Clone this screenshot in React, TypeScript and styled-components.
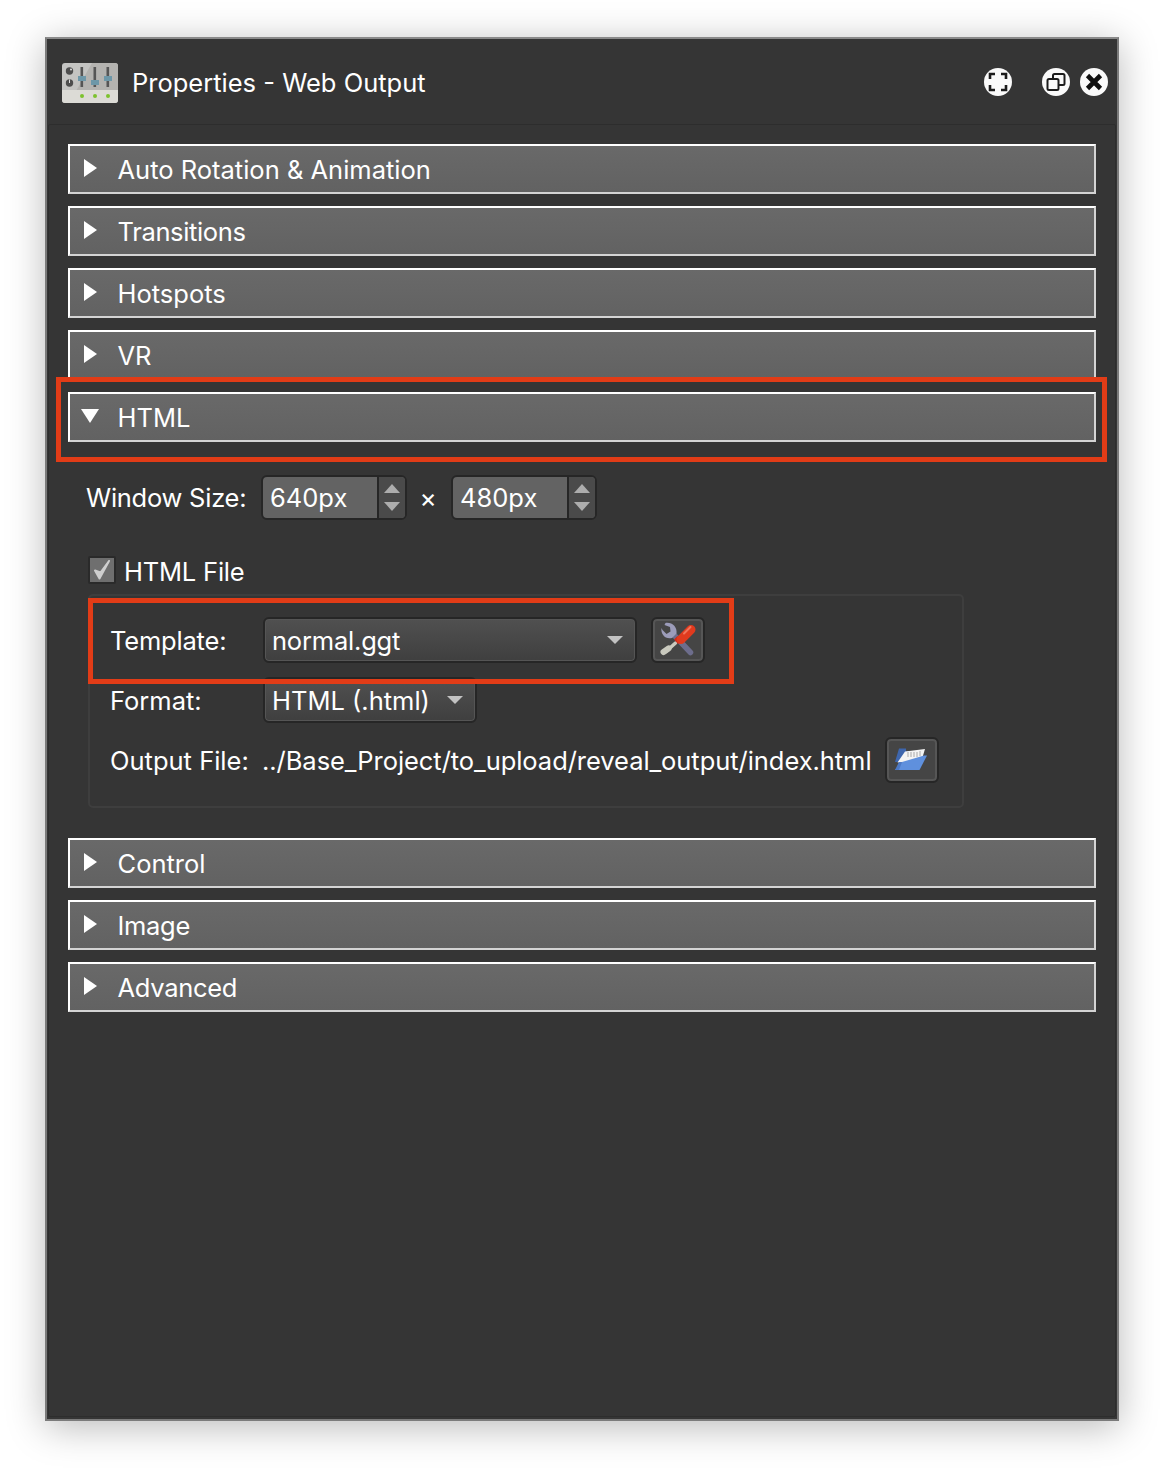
import React from "react";
import styled, { createGlobalStyle } from "styled-components";

const Global = createGlobalStyle`
  html, body { margin: 0; padding: 0; background: #fff; }
  body { font-family: Inter, "Noto Sans", "Liberation Sans", sans-serif; }
  * { box-sizing: border-box; }
`;

const Page = styled.div`
  width: 1164px;
  height: 1474px;
  padding: 37px 45px 0;
  overflow: hidden;
`;
const Win = styled.div`
  width: 1074px;
  height: 1384px;
  background: #353535;
  border: 2px solid #7b7b7b;
  border-top-color: #8a8a8a;
  box-shadow: 0 6px 36px rgba(0, 0, 0, 0.28);
  display: flex;
  flex-direction: column;
  color: #fff;
`;
const TitleBar = styled.header`
  height: 85px;
  flex: none;
  display: flex;
  align-items: center;
  padding: 2px 9px 0 15px;
`;
const Title = styled.h1`
  margin: 0 0 0 14px;
  font-size: 25.5px;
  font-weight: 400;
  line-height: 32px;
  flex: 1;
`;
const CircleBtn = styled.button<{ $ml?: number }>`
  width: 28px;
  height: 28px;
  padding: 0;
  border: 0;
  border-radius: 50%;
  background: #fafafa;
  margin-left: ${(p) => p.$ml ?? 0}px;
  margin-top: -2px;
  display: flex;
  align-items: center;
  justify-content: center;
`;
const Panel = styled.main`
  flex: 1;
  margin: 0 1px 2px 1px;
  border: 1px solid #2d2d2d;
  border-radius: 2px;
  padding: 19px 19px 0 19px;
  display: flex;
  flex-direction: column;
  gap: 12px;
`;
const HeaderWrap = styled.div`
  position: relative;
`;
const Header = styled.div<{ $ls?: number }>`
  height: 50px;
  display: flex;
  align-items: center;
  background: linear-gradient(#696969, #626262);
  border: 2px solid #d4d4d4;
  border-top-color: #fff;
  border-left-color: #fff;
  font-size: 25.5px;
  line-height: 32px;
  letter-spacing: ${(p) => p.$ls ?? 0}px;
  padding-left: 47.5px;
  padding-top: 1px;
  position: relative;
`;
const ArrowRight = styled.span`
  position: absolute;
  left: 14px;
  top: 13px;
  width: 0;
  height: 0;
  border-left: 13px solid #fff;
  border-top: 9.5px solid transparent;
  border-bottom: 9.5px solid transparent;
`;
const ArrowDown = styled.span`
  position: absolute;
  left: 11px;
  top: 15px;
  width: 0;
  height: 0;
  border-top: 14px solid #fff;
  border-left: 9.5px solid transparent;
  border-right: 9.5px solid transparent;
`;
const RedBox = styled.div<{ $t: number; $r: number; $b: number; $l: number }>`
  position: absolute;
  top: ${(p) => p.$t}px;
  right: ${(p) => p.$r}px;
  bottom: ${(p) => p.$b}px;
  left: ${(p) => p.$l}px;
  border: 5px solid #e23c17;
  pointer-events: none;
`;
const Body = styled.section`
  height: 372px;
  padding: 21px 0 0 18px;
  display: flex;
  flex-direction: column;
`;
const SizeRow = styled.div`
  display: flex;
  align-items: center;
  height: 45px;
  font-size: 25.5px;
`;
const SizeLabel = styled.span`
  width: 175px;
  flex: none;
  letter-spacing: -0.25px;
`;
const Times = styled.span`
  width: 44px;
  padding-right: 2px;
  text-align: center;
  font-size: 26px;
`;
const Spin = styled.div`
  width: 146px;
  height: 45px;
  border: 2px solid #262626;
  border-radius: 6px;
  background: #636363;
  display: flex;
  overflow: hidden;
`;
const SpinValue = styled.span`
  flex: 1;
  padding-left: 7px;
  font-size: 25.5px;
  line-height: 42px;
  color: #fff;
`;
const SpinArrows = styled.span`
  width: 28px;
  background: #4a4a4a;
  border-left: 2px solid #262626;
  display: flex;
  flex-direction: column;
  align-items: center;
  justify-content: center;
  gap: 9px;
`;
const SpinUp = styled.span`
  border-bottom: 9px solid #adadad;
  border-left: 8px solid transparent;
  border-right: 8px solid transparent;
`;
const SpinDown = styled.span`
  border-top: 9px solid #adadad;
  border-left: 8px solid transparent;
  border-right: 8px solid transparent;
`;
const CheckRow = styled.div`
  display: flex;
  align-items: center;
  gap: 8px;
  height: 28px;
  margin: 36px 0 0 2px;
  font-size: 25.5px;
`;
const CheckText = styled.span`
  padding-top: 2px;
  letter-spacing: -0.2px;
`;
const CheckBox = styled.span`
  width: 28px;
  height: 28px;
  background: #6f6f6f;
  border: 2px solid #2a2a2a;
  border-radius: 2px;
  display: flex;
  align-items: center;
  justify-content: center;
`;
const Group = styled.div`
  position: relative;
  margin: 10px 0 0 2px;
  width: 876px;
  height: 214px;
  border: 2px solid #3e3e3e;
  border-radius: 5px;
  padding: 21px 20px 0;
  display: flex;
  flex-direction: column;
  gap: 14px;
`;
const FormRow = styled.div<{ $ls?: number }>`
  display: flex;
  align-items: center;
  height: 46px;
  font-size: 25.5px;
  letter-spacing: ${(p) => p.$ls ?? 0}px;
`;
const FormLabel = styled.span`
  width: 153px;
  flex: none;
`;
const Combo = styled.div<{ $w: number }>`
  width: ${(p) => p.$w}px;
  height: 46px;
  border: 2px solid #262626;
  border-radius: 6px;
  background: linear-gradient(#505050, #3f3f3f);
  box-shadow: inset 0 0 0 1px #555;
  display: flex;
  align-items: center;
  justify-content: space-between;
  padding: 0 12px 0 7px;
`;
const ComboArrow = styled.span`
  border-top: 8px solid #c2c2c2;
  border-left: 8px solid transparent;
  border-right: 8px solid transparent;
`;
const IconBtn = styled.button<{ $ml: number }>`
  width: 54px;
  height: 46px;
  padding: 0;
  margin-left: ${(p) => p.$ml}px;
  border: 2px solid #262626;
  border-radius: 6px;
  background: #454545;
  box-shadow: inset 0 0 0 2px #565656;
  display: flex;
  align-items: center;
  justify-content: center;
`;
const PathText = styled.span`
  margin-left: -1px;
  width: 610px;
  flex: none;
  white-space: nowrap;
  letter-spacing: -0.05px;
`;

const MixerIcon = () => (
  <svg width="56" height="40" viewBox="0 0 56 40">
    <rect width="56" height="40" rx="3" fill="#c4c4c2" />
    <path d="M30 0H53a3 3 0 0 1 3 3V28H14Z" fill="#b2b1ae" opacity=".9" />
    <path d="M0 27H56V37a3 3 0 0 1-3 3H3a3 3 0 0 1-3-3Z" fill="#dcdbd6" />
    <circle cx="7.5" cy="8" r="3.7" fill="#4d4d4d" />
    <circle cx="9" cy="6.5" r="1" fill="#ddd" />
    <circle cx="7.5" cy="20" r="3.7" fill="#4d4d4d" />
    <rect x="7" y="16.5" width="1" height="3.5" fill="#ddd" />
    <rect x="18.5" y="4" width="2.6" height="20" fill="#555" />
    <rect x="31.5" y="4" width="2.6" height="20" fill="#555" />
    <rect x="44.5" y="4" width="2.6" height="20" fill="#555" />
    <rect x="16" y="13" width="8" height="5" fill="#6d97a8" />
    <rect x="29" y="17" width="8" height="5" fill="#6d97a8" />
    <rect x="42" y="13" width="8" height="5" fill="#6d97a8" />
    <circle cx="20" cy="33" r="2" fill="#7cc22f" />
    <circle cx="33" cy="33" r="2" fill="#7cc22f" />
    <circle cx="46" cy="33" r="2" fill="#7cc22f" />
  </svg>
);
const ExpandIcon = () => (
  <svg width="20" height="20" viewBox="0 0 20 20" fill="none" stroke="#1c1c1c" strokeWidth="2.6">
    <path d="M2 7V2H7M13 2H18V7M18 13V18H13M7 18H2V13" />
  </svg>
);
const RestoreIcon = () => (
  <svg width="20" height="20" viewBox="0 0 20 20" fill="none" stroke="#1c1c1c" strokeWidth="2">
    <rect x="1.5" y="7" width="11" height="11" rx="1.5" />
    <path d="M7 7V3.5A1.5 1.5 0 0 1 8.5 2H17A1.5 1.5 0 0 1 18.500 3.500V11.500A1.500 1.500 0 0 1 17 13H12.500" />
  </svg>
);
const CloseIcon = () => (
  <svg width="20" height="20" viewBox="0 0 20 20" fill="none" stroke="#111" strokeWidth="4.600">
    <path d="M3.500 3.500L16.500 16.500M16.500 3.500L3.500 16.500" />
  </svg>
);
const CheckMark = () => (
  <svg width="20" height="22" viewBox="0 0 20 22" fill="none">
    <path d="M3 11.500L7.500 19.500L17 2L8.500 13.500Z" fill="#cfcfcf" stroke="#cfcfcf" strokeWidth="2" strokeLinejoin="round" />
  </svg>
);
const ToolsIcon = () => (
  <svg width="36" height="36" viewBox="0 0 36 36">
    <path d="M14 13L30.500 30.500" stroke="#6d6d8c" strokeWidth="5.500" strokeLinecap="round" />
    <path d="M1.500 6C0.500 12 5 17.500 12 16L16.500 11.500C17.500 5 12 0 5.500 1L4.500 3L10 5L10.500 9.500L6.500 12L2.500 8Z" fill="#9c9cba" />
    <path d="M15.500 21L6 29.500" stroke="#c9c9be" strokeWidth="3.500" strokeLinecap="round" />
    <path d="M8.500 26.500L3.500 30" stroke="#c9c9be" strokeWidth="6" strokeLinecap="round" />
    <path d="M14 17.500L18 22L22 18.500L17.500 14Z" fill="#cf2818" />
    <path d="M21 17.500L31 7.500" stroke="#e03a1e" strokeWidth="9" strokeLinecap="round" />
    <path d="M24 11.500L30.500 5" stroke="#f0745a" strokeWidth="2" strokeLinecap="round" />
  </svg>
);
const FolderIcon = () => (
  <svg width="34" height="24" viewBox="0 0 34 24">
    <path d="M4 0.500H11L11 3H29L24 14H0Z" fill="#3e66ad" />
    <path d="M2.500 14.500L10 3.500L30 1L27 11L8 14.500Z" fill="#f4f4f4" />
    <path d="M13 4V9M16 4V9M19 4V9M22 4V9M25 3V8" stroke="#a8a8a8" strokeWidth="1" />
    <path d="M7 14L29 7.500H32L24.500 22H0Z" fill="#5f90dd" />
    <path d="M0 22L4 14L7 14L4 22Z" fill="#4c78c4" />
  </svg>
);

const Section = ({ title, ls }: { title: string; ls?: number }) => (
  <Header $ls={ls}>
    <ArrowRight />
    {title}
  </Header>
);

const SpinBox = ({ value }: { value: string }) => (
  <Spin>
    <SpinValue>{value}</SpinValue>
    <SpinArrows>
      <SpinUp />
      <SpinDown />
    </SpinArrows>
  </Spin>
);

export default function App() {
  return (
    <Page>
      <Global />
      <Win>
        <TitleBar>
          <MixerIcon />
          <Title>Properties - Web Output</Title>
          <CircleBtn aria-label="Fullscreen"><ExpandIcon /></CircleBtn>
          <CircleBtn aria-label="Float" $ml={30}><RestoreIcon /></CircleBtn>
          <CircleBtn aria-label="Close" $ml={10}><CloseIcon /></CircleBtn>
        </TitleBar>
        <Panel>
          <Section title="Auto Rotation & Animation" />
          <Section title="Transitions" ls={-0.35} />
          <Section title="Hotspots" />
          <Section title="VR" />
          <HeaderWrap>
            <Header>
              <ArrowDown />
              HTML
            </Header>
            <RedBox $t={-15} $r={-11} $b={-20} $l={-12} />
          </HeaderWrap>
          <Body>
            <SizeRow>
              <SizeLabel>Window Size:</SizeLabel>
              <SpinBox value="640px" />
              <Times>×</Times>
              <SpinBox value="480px" />
            </SizeRow>
            <CheckRow>
              <CheckBox><CheckMark /></CheckBox>
              <CheckText>HTML File</CheckText>
            </CheckRow>
            <Group>
              <FormRow $ls={-0.2}>
                <FormLabel>Template:</FormLabel>
                <Combo $w={374}>
                  normal.ggt
                  <ComboArrow />
                </Combo>
                <IconBtn $ml={14} aria-label="Edit template"><ToolsIcon /></IconBtn>
              </FormRow>
              <FormRow>
                <FormLabel>Format:</FormLabel>
                <Combo $w={214}>
                  HTML (.html)
                  <ComboArrow />
                </Combo>
              </FormRow>
              <FormRow>
                <FormLabel>Output File:</FormLabel>
                <PathText>../Base_Project/to_upload/reveal_output/index.html</PathText>
                <IconBtn $ml={13} aria-label="Open"><FolderIcon /></IconBtn>
              </FormRow>
              <RedBox $t={2} $r={228} $b={122} $l={-2} />
            </Group>
          </Body>
          <Section title="Control" />
          <Section title="Image" ls={-0.3} />
          <Section title="Advanced" ls={-0.3} />
        </Panel>
      </Win>
    </Page>
  );
}
